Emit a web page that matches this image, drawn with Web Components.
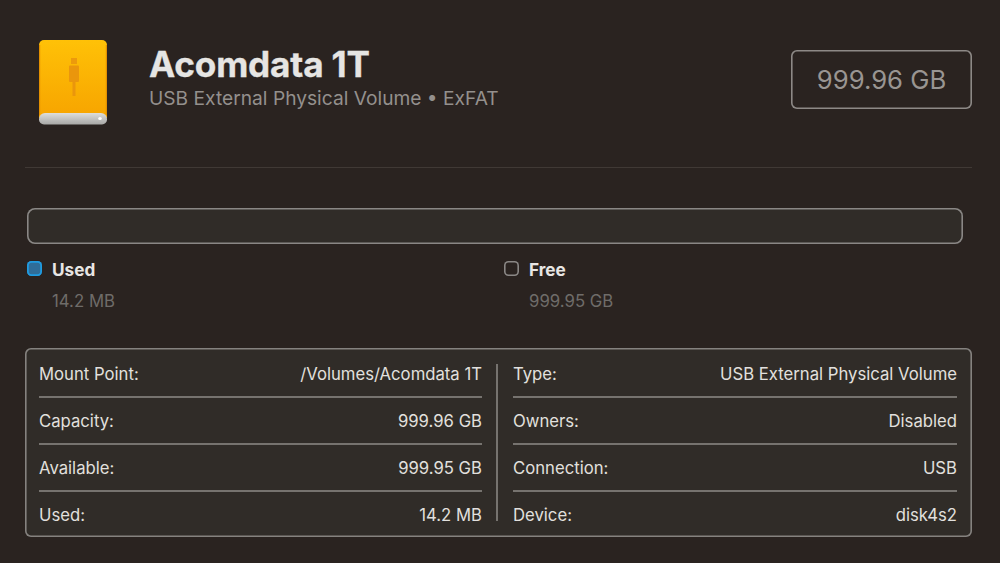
<!DOCTYPE html>
<html>
<head>
<meta charset="utf-8">
<title>Acomdata 1T</title>
<style>
html,body{margin:0;height:563px;overflow:hidden;background:#2a2320}
body{font-family:Inter,"Liberation Sans",sans-serif;color:#e6e4e2}
</style>
</head>
<body>
<disk-panel>
  <disk-header name="Acomdata 1T" sub="USB External Physical Volume • ExFAT" size="999.96 GB"></disk-header>
  <usage-bar></usage-bar>
  <usage-legend>
    <legend-item label="Used" value="14.2 MB" kind="used"></legend-item>
    <legend-item label="Free" value="999.95 GB"></legend-item>
  </usage-legend>
  <info-table>
    <info-row slot="left" label="Mount Point:" value="/Volumes/Acomdata 1T"></info-row>
    <info-row slot="left" label="Capacity:" value="999.96 GB"></info-row>
    <info-row slot="left" label="Available:" value="999.95 GB"></info-row>
    <info-row slot="left" last label="Used:" value="14.2 MB"></info-row>
    <info-row slot="right" label="Type:" value="USB External Physical Volume"></info-row>
    <info-row slot="right" label="Owners:" value="Disabled"></info-row>
    <info-row slot="right" label="Connection:" value="USB"></info-row>
    <info-row slot="right" last label="Device:" value="disk4s2"></info-row>
  </info-table>
</disk-panel>
<script>
class DiskPanel extends HTMLElement {
  constructor() {
    super();
    this.attachShadow({ mode: "open" });
    this.shadowRoot.innerHTML = `
    <style>
    :host{
        display:flex;
        flex-direction:column;
        box-sizing:border-box;
        width:1000px;
        height:563px;
        padding:40px 28px 0 25px
    }
    </style>
    <slot></slot>`;
  }
}

class DiskHeader extends HTMLElement {
  constructor() {
    super();
    this.attachShadow({ mode: "open" });
    this.shadowRoot.innerHTML = `
    <style>
    :host{
        display:block;
        height:128px;
        box-sizing:border-box;
        border-bottom:1px solid #403935
    }
    .top{
        display:flex;
        align-items:flex-start
    }
    svg{
        display:block;
        margin-left:14px;
        width:68px;
        height:85px;
        flex:none
    }
    .text{
        flex:1;
        margin-left:42px;
        padding-top:3px
    }
    .name{
        font-size:35.2px;
        line-height:43px;
        font-weight:700;
        letter-spacing:-.2px;
        color:#e6e5e3;
        -webkit-text-stroke:.3px #e6e5e3
    }
    .sub{
        font-size:19.2px;
        line-height:24px;
        color:#94908d
    }
    .size{
        box-sizing:border-box;
        width:181px;
        height:59px;
        margin:10px 0 0 0;
        box-shadow:inset 0 0 0 1.6px #8d8986;
        border-radius:6px;
        display:flex;
        align-items:center;
        justify-content:center;
        font-size:25.7px;
        color:#999592
    }
    </style>
    <div class="top">
      <svg viewBox="0 0 68 85">
        <defs>
          <linearGradient id="body" x1="0" y1="0" x2="0" y2="1">
            <stop offset="0" stop-color="#ffc107"/>
            <stop offset="1" stop-color="#f7a400"/>
          </linearGradient>
          <linearGradient id="base" x1="0" y1="0" x2="0" y2="1">
            <stop offset="0" stop-color="#dededc"/>
            <stop offset="1" stop-color="#a8a8a6"/>
          </linearGradient>
        </defs>
        <path d="M5 0h58a5 5 0 0 1 5 5v73H0V5a5 5 0 0 1 5-5z" fill="url(#body)"/>
        <path d="M0 5v70h1.200V5zM66.800 5v70H68V5z" fill="#e39000"/>
        <rect x="32" y="18" width="6" height="6" fill="#ec9a0c"/>
        <rect x="30" y="25.500" width="10" height="16.500" rx="1" fill="#ea960c"/>
        <rect x="33.500" y="42" width="3" height="14" fill="#ea960c"/>
        <path d="M6 73h56a6 6 0 0 1 6 6v.5a5 5 0 0 1-5 5H5a5 5 0 0 1-5-5V79a6 6 0 0 1 6-6z" fill="url(#base)"/>
        <ellipse cx="61" cy="78.500" rx="1.800" ry="1.500" fill="#fff"/>
      </svg>
      <div class="text">
        <div class="name"></div>
        <div class="sub"></div>
      </div>
      <div class="size"></div>
    </div>`;
  }
  connectedCallback() {
    this.shadowRoot.querySelector(".name").textContent = this.getAttribute("name");
    this.shadowRoot.querySelector(".sub").textContent = this.getAttribute("sub");
    this.shadowRoot.querySelector(".size").textContent = this.getAttribute("size");
  }
}

class UsageBar extends HTMLElement {
  constructor() {
    super();
    this.attachShadow({ mode: "open" });
    this.shadowRoot.innerHTML = `
    <style>
    :host{
        display:block;
        box-sizing:border-box;
        width:936px;
        height:36px;
        margin:40px 0 0 2px;
        background:#302c28;
        box-shadow:inset 0 0 0 1.6px #8a8785;
        border-radius:8px
    }
    </style>`;
  }
}

class UsageLegend extends HTMLElement {
  constructor() {
    super();
    this.attachShadow({ mode: "open" });
    this.shadowRoot.innerHTML = `
    <style>
    :host{
        display:grid;
        grid-template-columns:477px 1fr;
        margin:15px 0 0 2px;
        height:89px
    }
    </style>
    <slot></slot>`;
  }
}

class LegendItem extends HTMLElement {
  constructor() {
    super();
    this.attachShadow({ mode: "open" });
    this.shadowRoot.innerHTML = `
    <style>
    :host{
        display:grid;
        grid-template-columns:25px 1fr;
        grid-template-rows:22px 22px;
        row-gap:9px;
        align-items:center
    }
    .box{
        box-sizing:border-box;
        width:15px;
        height:15px;
        margin:-3px 0 0 0;
        box-shadow:inset 0 0 0 1.6px #8a8785;
        border-radius:4.500px
    }
    :host([kind="used"]) .box{
        background:#2f6d99;
        box-shadow:inset 0 0 0 1.8px #1f9be0
    }
    .label{
        font-size:17.2px;
        font-weight:700;
        margin-top:-1px;
        color:#e8e6e4
    }
    .value{
        grid-column:2;
        font-size:16.8px;
        color:#6f6c69
    }
    </style>
    <div class="box"></div>
    <div class="label"></div>
    <div class="value"></div>`;
  }
  connectedCallback() {
    this.shadowRoot.querySelector(".label").textContent = this.getAttribute("label");
    this.shadowRoot.querySelector(".value").textContent = this.getAttribute("value");
  }
}

class InfoTable extends HTMLElement {
  constructor() {
    super();
    this.attachShadow({ mode: "open" });
    this.shadowRoot.innerHTML = `
    <style>
    :host{
        display:grid;
        grid-template-columns:458px 2px 1fr;
        box-sizing:border-box;
        width:947px;
        height:189px;
        padding:3px 15px 0 13px;
        background:#302c28;
        box-shadow:inset 0 0 0 1.6px #85827f;
        border-radius:6px
    }
    .col{
        display:flex;
        flex-direction:column
    }
    .left{
        padding:0 14px 0 1px
    }
    .right{
        padding-left:15px
    }
    .rule{
        background:#76736f;
        width:2px;
        margin:13px 0 16px
    }
    </style>
    <div class="col left"><slot name="left"></slot></div>
    <div class="rule"></div>
    <div class="col right"><slot name="right"></slot></div>`;
  }
}

class InfoRow extends HTMLElement {
  constructor() {
    super();
    this.attachShadow({ mode: "open" });
    this.shadowRoot.innerHTML = `
    <style>
    :host{
        display:flex;
        justify-content:space-between;
        align-items:center;
        box-sizing:border-box;
        height:47px;
        padding-top:1px;
        font-size:16.7px;
        color:#e2e0de;
        border-bottom:2px solid #76736f
    }
    :host([last]){
        height:45px;
        border-bottom:0
    }
    .k,.v{
        white-space:pre
    }
    </style>
    <span class="k"></span><span class="v"></span>`;
  }
  connectedCallback() {
    this.shadowRoot.querySelector(".k").textContent = this.getAttribute("label");
    this.shadowRoot.querySelector(".v").textContent = this.getAttribute("value");
  }
}

customElements.define("disk-panel", DiskPanel);
customElements.define("disk-header", DiskHeader);
customElements.define("usage-bar", UsageBar);
customElements.define("usage-legend", UsageLegend);
customElements.define("legend-item", LegendItem);
customElements.define("info-table", InfoTable);
customElements.define("info-row", InfoRow);
</script>
</body>
</html>
